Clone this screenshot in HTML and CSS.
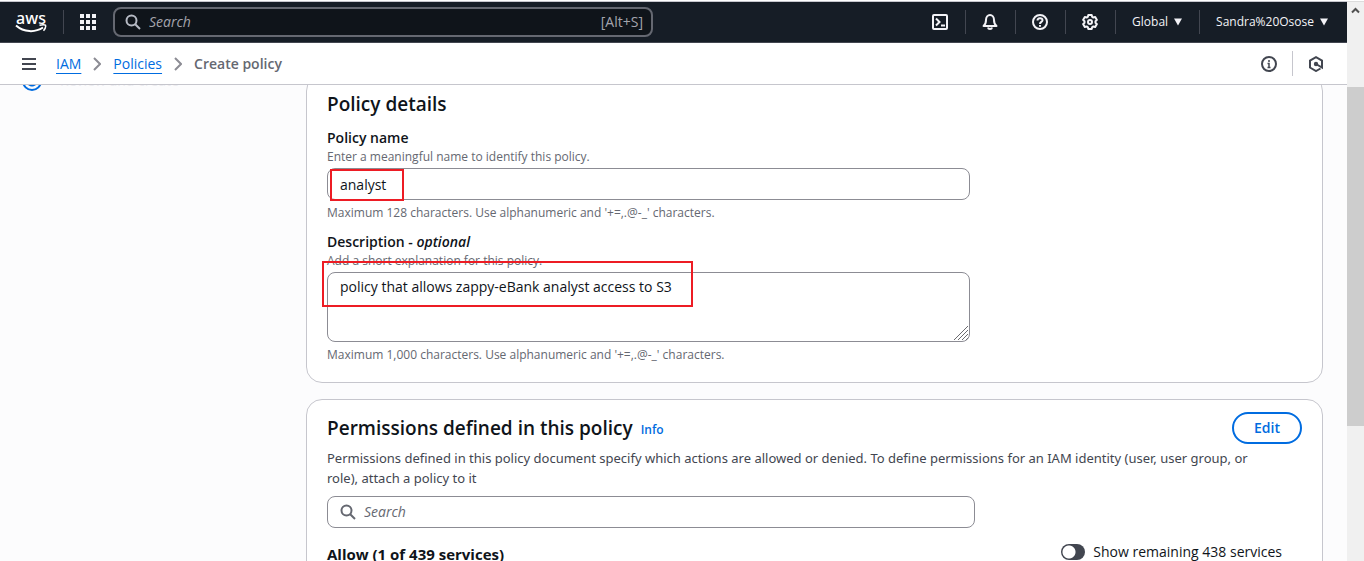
FILE: index.html
```html
<!DOCTYPE html>
<html lang="en">
<head>
<meta charset="utf-8">
<title>Create policy | IAM</title>
<link rel="stylesheet" href="styles.css">
</head>
<body>
<div class="app">
  <header class="topbar">
    <a class="logo" href="#" aria-label="AWS home">
      <span class="logo-text">aws</span>
      <svg class="logo-smile" width="32" height="9" viewBox="0 0 32 9" fill="none" stroke="#fff" aria-hidden="true"><path d="M1 1.500C9 8.500 20 8.800 28 3.500" stroke-width="2"/><path d="M24.500 1.200C27 .700 29.500.600 30.500 1.200C31 2.500 30 5 28.500 6.800" stroke-width="1.500"/></svg>
    </a>
    <span class="divider"></span>
    <button class="icon-btn apps" aria-label="Services">
      <svg width="16" height="16" viewBox="0 0 16 16" fill="#f3f3f7"><path d="M0 0h4v4H0zM6 0h4v4H6zM12 0h4v4h-4zM0 6h4v4H0zM6 6h4v4H6zM12 6h4v4h-4zM0 12h4v4H0zM6 12h4v4H6zM12 12h4v4h-4z"/></svg>
    </button>
    <div class="global-search">
      <svg width="16" height="16" viewBox="0 0 16 16" fill="none" stroke="#b6bac4" stroke-width="2"><circle cx="6.500" cy="6.500" r="5"/><path d="M10.200 10.200L15 15"/></svg>
      <input class="search-input" type="text" placeholder="Search" aria-label="Search services">
      <span class="shortcut">[Alt+S]</span>
    </div>
    <nav class="tools">
      <button class="icon-btn tool" aria-label="CloudShell"><svg width="16" height="16" viewBox="0 0 16 16" fill="none" stroke="#f3f3f7" stroke-width="2"><rect x="1" y="1" width="14" height="14" rx="1"/><path d="M4 4.500L7.500 8L4 11.500M9 11.500h4"/></svg></button>
      <button class="icon-btn tool" aria-label="Notifications"><svg width="16" height="16" viewBox="0 0 16 16" fill="none" stroke="#f3f3f7" stroke-width="2" stroke-linejoin="round"><path d="M1.500 12H14.500C12.500 10.500 12 9 12 6A4 5 0 0 0 4 6C4 9 3.500 10.500 1.500 12Z"/><path d="M6 13.500C6.300 15.500 9.700 15.500 10 13.500"/></svg></button>
      <button class="icon-btn tool" aria-label="Help"><svg width="16" height="16" viewBox="0 0 16 16" fill="none" stroke="#f3f3f7" stroke-width="2"><circle cx="8" cy="8" r="7"/><path d="M5.500 6.500C5.500 3.500 10.500 3.500 10.500 6.200C10.500 8 8 7.800 8 10"/><path d="M8 11v1.800"/></svg></button>
      <button class="icon-btn tool" aria-label="Settings"><svg width="16" height="16" viewBox="0 0 16 16" fill="none" stroke="#f3f3f7" stroke-width="2" stroke-linejoin="round"><path d="M6.300 1h3.400l.5 1.900 1.100.6L13.200 3l1.700 2.900L13.500 7.300v1.400l1.400 1.400L13.200 13l-1.900-.5-1.100.6L9.700 15H6.300l-.5-1.900-1.100-.6-1.900.5-1.700-2.900L2.500 8.700V7.300L1.100 5.900 2.800 3l1.900.5 1.100-.6z"/><circle cx="8" cy="8" r="2"/></svg></button>
      <button class="menu-btn region">Global <svg width="8" height="8" viewBox="0 0 8 8" fill="#f3f3f7"><path d="M0 0.500h8L4 7.500z"/></svg></button>
      <button class="menu-btn account">Sandra%20Osose <svg width="8" height="8" viewBox="0 0 8 8" fill="#f3f3f7"><path d="M0 0.500h8L4 7.500z"/></svg></button>
    </nav>
  </header>

  <div class="crumbbar">
    <button class="icon-btn" aria-label="Open navigation"><svg width="14" height="12" viewBox="0 0 14 12" fill="#424650"><path d="M0 0h14v2H0zM0 5h14v2H0zM0 10h14v2H0z"/></svg></button>
    <nav class="crumbs" aria-label="Breadcrumb">
      <a href="#">IAM</a>
      <svg width="8" height="14" viewBox="0 0 8 14" fill="none" stroke="#8c8c94" stroke-width="2"><path d="M1 1l6 6-6 6"/></svg>
      <a href="#">Policies</a>
      <svg width="8" height="14" viewBox="0 0 8 14" fill="none" stroke="#8c8c94" stroke-width="2"><path d="M1 1l6 6-6 6"/></svg>
      <span class="current">Create policy</span>
    </nav>
    <div class="page-tools">
      <button class="icon-btn" aria-label="Info"><svg width="16" height="16" viewBox="0 0 16 16" fill="none" stroke="#424650" stroke-width="2"><circle cx="8" cy="8" r="7"/><path d="M8 4v2M6.500 7.500H8V12M6.500 11.500h3" stroke-width="1.500"/></svg></button>
      <span class="rule"></span>
      <button class="icon-btn" aria-label="Recent activity"><svg width="16" height="16" viewBox="0 0 16 16" fill="none" stroke="#424650" stroke-width="2"><path d="M12.500 12.500L8 15L2 11.500V4.500L8 1.200L14 4.500V11.500L8 8"/><circle cx="8" cy="8" r="2.200" fill="#424650" stroke="none"/></svg></button>
    </div>
  </div>

  <main class="viewport">
    <div class="content">
      <aside class="steps">
        <span class="step-dot"></span>
        <span class="step-name">Review and create</span>
      </aside>
      <div class="cards">
        <section class="card details">
          <h2>Policy details</h2>
          <div class="field">
            <label for="name">Policy name</label>
            <p class="hint">Enter a meaningful name to identify this policy.</p>
            <div class="control">
              <input class="box" id="name" type="text" value="analyst">
              <span class="mark mark-name"></span>
            </div>
            <p class="hint">Maximum 128 characters. Use alphanumeric and '+=,.@-_' characters.</p>
          </div>
          <div class="field">
            <label for="desc">Description - <em>optional</em></label>
            <p class="hint">Add a short explanation for this policy.</p>
            <div class="control">
              <textarea class="box area" id="desc">policy that allows zappy-eBank analyst access to S3</textarea>
              <svg class="grip" width="16" height="16" viewBox="0 0 16 16" fill="none" stroke="#6b6b70" aria-hidden="true"><path d="M1 15L15 1M5 15L15 5M9 15L15 9M13 15L15 13"/></svg>
              <span class="mark mark-desc"></span>
            </div>
            <p class="hint">Maximum 1,000 characters. Use alphanumeric and '+=,.@-_' characters.</p>
          </div>
        </section>

        <section class="card permissions">
          <div class="card-head">
            <h2>Permissions defined in this policy</h2>
            <a class="info" href="#">Info</a>
            <button class="edit">Edit</button>
          </div>
          <p class="lead">Permissions defined in this policy document specify which actions are allowed or denied. To define permissions for an IAM identity (user, user group, or role), attach a policy to it</p>
          <div class="filter">
            <svg width="16" height="16" viewBox="0 0 16 16" fill="none" stroke="#656871" stroke-width="2"><circle cx="6.500" cy="6.500" r="5"/><path d="M10.200 10.200L15 15"/></svg>
            <input class="search-input" type="text" placeholder="Search" aria-label="Search permissions">
          </div>
          <div class="allow">
            <h3>Allow (1 of 439 services)</h3>
            <label class="switch"><input type="checkbox">Show remaining 438 services</label>
          </div>
        </section>
      </div>
    </div>
  </main>
</div>
<div class="scrollbar" aria-hidden="true">
  <svg class="arrow" width="17" height="17" viewBox="0 0 17 17" fill="none" stroke="#505050" stroke-width="2"><path d="M5 10.500L8.500 7L12 10.500"/></svg>
  <span class="thumb"></span>
</div>
</body>
</html>
```
FILE: styles.css
```css
* { box-sizing: border-box; }

body {
  margin: 0;
  height: 100vh;
  display: flex;
  overflow: hidden;
  border-top: 1px solid #fff;
  background: #fcfcfd;
  color: #0f141a;
  font: 14px/20px "Open Sans", "Noto Sans", sans-serif;
}

h2, h3, p { margin: 0; }
button, input, textarea { font: inherit; color: inherit; }
svg { flex: none; display: block; }
a { color: #006ce0; }

.app {
  flex: 1;
  min-width: 0;
  display: flex;
  flex-direction: column;
  border-top: 1px solid #c6c6cd;
}

.icon-btn {
  display: flex;
  padding: 0;
  border: 0;
  background: none;
}

/* Top bar */
.topbar {
  flex: none;
  display: flex;
  align-items: center;
  height: 41px;
  padding: 0 19px 0 15px;
  background: #161d26;
  border-bottom: 1px solid #424650;
  color: #f3f3f7;
}

.logo {
  display: flex;
  flex-direction: column;
  align-items: center;
  width: 32px;
  color: #fff;
  text-decoration: none;
}
.logo-text { font: 500 16px/12px "Noto Sans", sans-serif; }
.divider { width: 1px; height: 24px; margin: 0 16px; background: #424650; }

.global-search {
  display: flex;
  align-items: center;
  gap: 8px;
  width: 540px;
  height: 30px;
  margin-left: 17px;
  padding: 0 8px 0 10px;
  border: 2px solid #656871;
  border-radius: 8px;
  background: #0f141a;
  color: #a4a4ad;
}

.search-input {
  flex: 1;
  min-width: 0;
  padding: 0;
  border: 0;
  outline: 0;
  background: none;
}
.search-input::placeholder { color: inherit; font-style: italic; opacity: 1; }

.tools { display: flex; align-items: center; margin-left: auto; }
.tool { height: 24px; align-items: center; padding: 0 17px 0 16px; border-right: 1px solid #424650; }
.menu-btn {
  display: flex;
  align-items: center;
  gap: 6px;
  height: 24px;
  padding: 0 17px 0 16px;
  border: 0;
  border-right: 1px solid #424650;
  background: none;
  font-size: 12px;
}
.account { padding-right: 0; border-right: 0; }

/* Breadcrumbs */
.crumbbar {
  flex: none;
  display: flex;
  align-items: center;
  height: 42px;
  padding: 0 23px 0 22px;
  background: #fff;
  border-bottom: 1px solid #c6c6cd;
}
.crumbs { display: flex; align-items: center; gap: 12px; margin-left: 20px; }
.crumbs a { text-underline-offset: 4px; }
.current { font-weight: 600; color: #656871; }
.page-tools { display: flex; align-items: center; gap: 15px; margin-left: auto; }
.rule { width: 1px; height: 25px; background: #c6c6cd; }

/* Scrolled page */
.viewport { flex: 1; min-height: 0; overflow: hidden; }
.content { display: flex; margin: -10px 24px 0 22px; }

.steps { flex: none; display: flex; gap: 18px; width: 284px; }
.step-dot { width: 20px; height: 20px; margin-top: -4px; border: 2px solid #006ce0; border-radius: 50%; background: radial-gradient(#006ce0 5px, transparent 6px); }
.step-name { margin-top: -4px; color: #ececf0; }

.cards { flex: 1; min-width: 0; display: flex; flex-direction: column; gap: 16px; }
.card { border: 1px solid #c6c6cd; border-radius: 16px; background: #fff; }
.details { padding: 16px 20px 18px; }
.permissions { padding: 12px 20px 20px; }

h2 { font-size: 19px; line-height: 24px; font-weight: 600; }
h3 { font-size: 15px; line-height: 24px; font-weight: 700; }

.field { margin-top: 12px; max-width: 643px; }
.field + .field { margin-top: 10px; }
.field label { display: block; font-weight: 600; }
.hint { font-size: 12px; line-height: 18px; color: #656871; }

.control { position: relative; margin: 2px 0 4px; }
.box {
  display: block;
  width: 100%;
  height: 32px;
  padding: 4px 12px;
  border: 1px solid #8c8c94;
  border-radius: 8px;
  outline: 0;
  background: #fff;
}
.area { height: 70px; resize: none; overflow: hidden; }
.grip { position: absolute; right: 1px; bottom: 1px; }

/* Red callouts drawn over the fields */
.mark { position: absolute; border: 2px solid #ed1c24; pointer-events: none; }
.mark-name { left: 3px; top: 1px; width: 74px; height: 32px; }
.mark-desc { left: -5px; top: -11px; width: 371px; height: 46px; }

.card-head { display: flex; align-items: center; gap: 8px; }
.info { font-size: 12px; line-height: 24px; font-weight: 600; text-decoration: none; padding-top: 4px; }
.edit {
  height: 32px;
  margin-left: auto;
  padding: 0 20px;
  border: 2px solid #006ce0;
  border-radius: 16px;
  background: #fff;
  color: #006ce0;
  font-weight: 600;
}
.lead { margin-top: 4px; padding-right: 20px; font: 13px/20px "Noto Sans", sans-serif; color: #424650; }

.filter {
  display: flex;
  align-items: center;
  gap: 8px;
  max-width: 648px;
  height: 32px;
  margin-top: 8px;
  padding: 0 12px;
  border: 1px solid #8c8c94;
  border-radius: 8px;
  color: #656871;
}

.allow { display: flex; justify-content: space-between; margin-top: 14px; padding-right: 20px; }
.switch { display: flex; align-items: center; gap: 8px; height: 20px; }
.switch input {
  appearance: none;
  width: 24px;
  height: 16px;
  margin: 0;
  border-radius: 8px;
  background: radial-gradient(circle at 8px 8px, #fff 6px, #424650 7px);
}

/* Page scrollbar */
.scrollbar { flex: none; width: 17px; background: #f0f0f0; border-top: 1px solid #dcdcdc; }
.arrow { margin-bottom: 68px; }
.thumb { display: block; height: 339px; background: #cdcdcd; }
```
